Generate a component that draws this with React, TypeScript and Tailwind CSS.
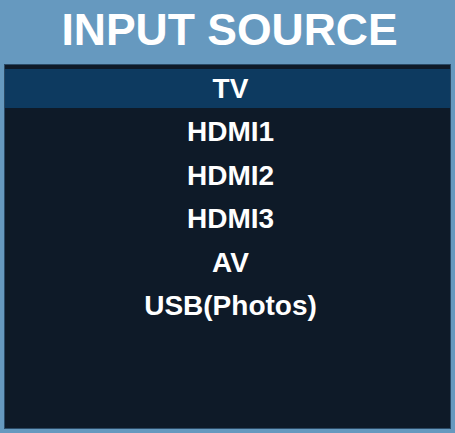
const sources = ["TV", "HDMI1", "HDMI2", "HDMI3", "AV", "USB(Photos)"];

export default function App() {
  const selected = 0;

  return (
    <div className="flex h-[433px] w-[455px] flex-col bg-[#6699bf] px-[4px] pb-[4px] font-['Liberation_Sans',Arial,sans-serif] font-bold text-white">
      <div className="flex h-[64px] shrink-0 justify-center pl-[4px] pt-[7.5px]">
        <h1 className="text-[44.5px] leading-none">INPUT SOURCE</h1>
      </div>
      <div className="flex flex-1 flex-col gap-[4.5px] border border-[#2a4a66] bg-[#0e1a28] pt-[4px]">
        {sources.map((name, i) => (
          <div
            key={name}
            className={
              i === selected
                ? "flex h-[39px] items-center justify-center bg-[#0d3a60] pl-[6px] text-[28px]"
                : "flex h-[39px] items-center justify-center pl-[6px] text-[28px]"
            }
          >
            {name}
          </div>
        ))}
      </div>
    </div>
  );
}
